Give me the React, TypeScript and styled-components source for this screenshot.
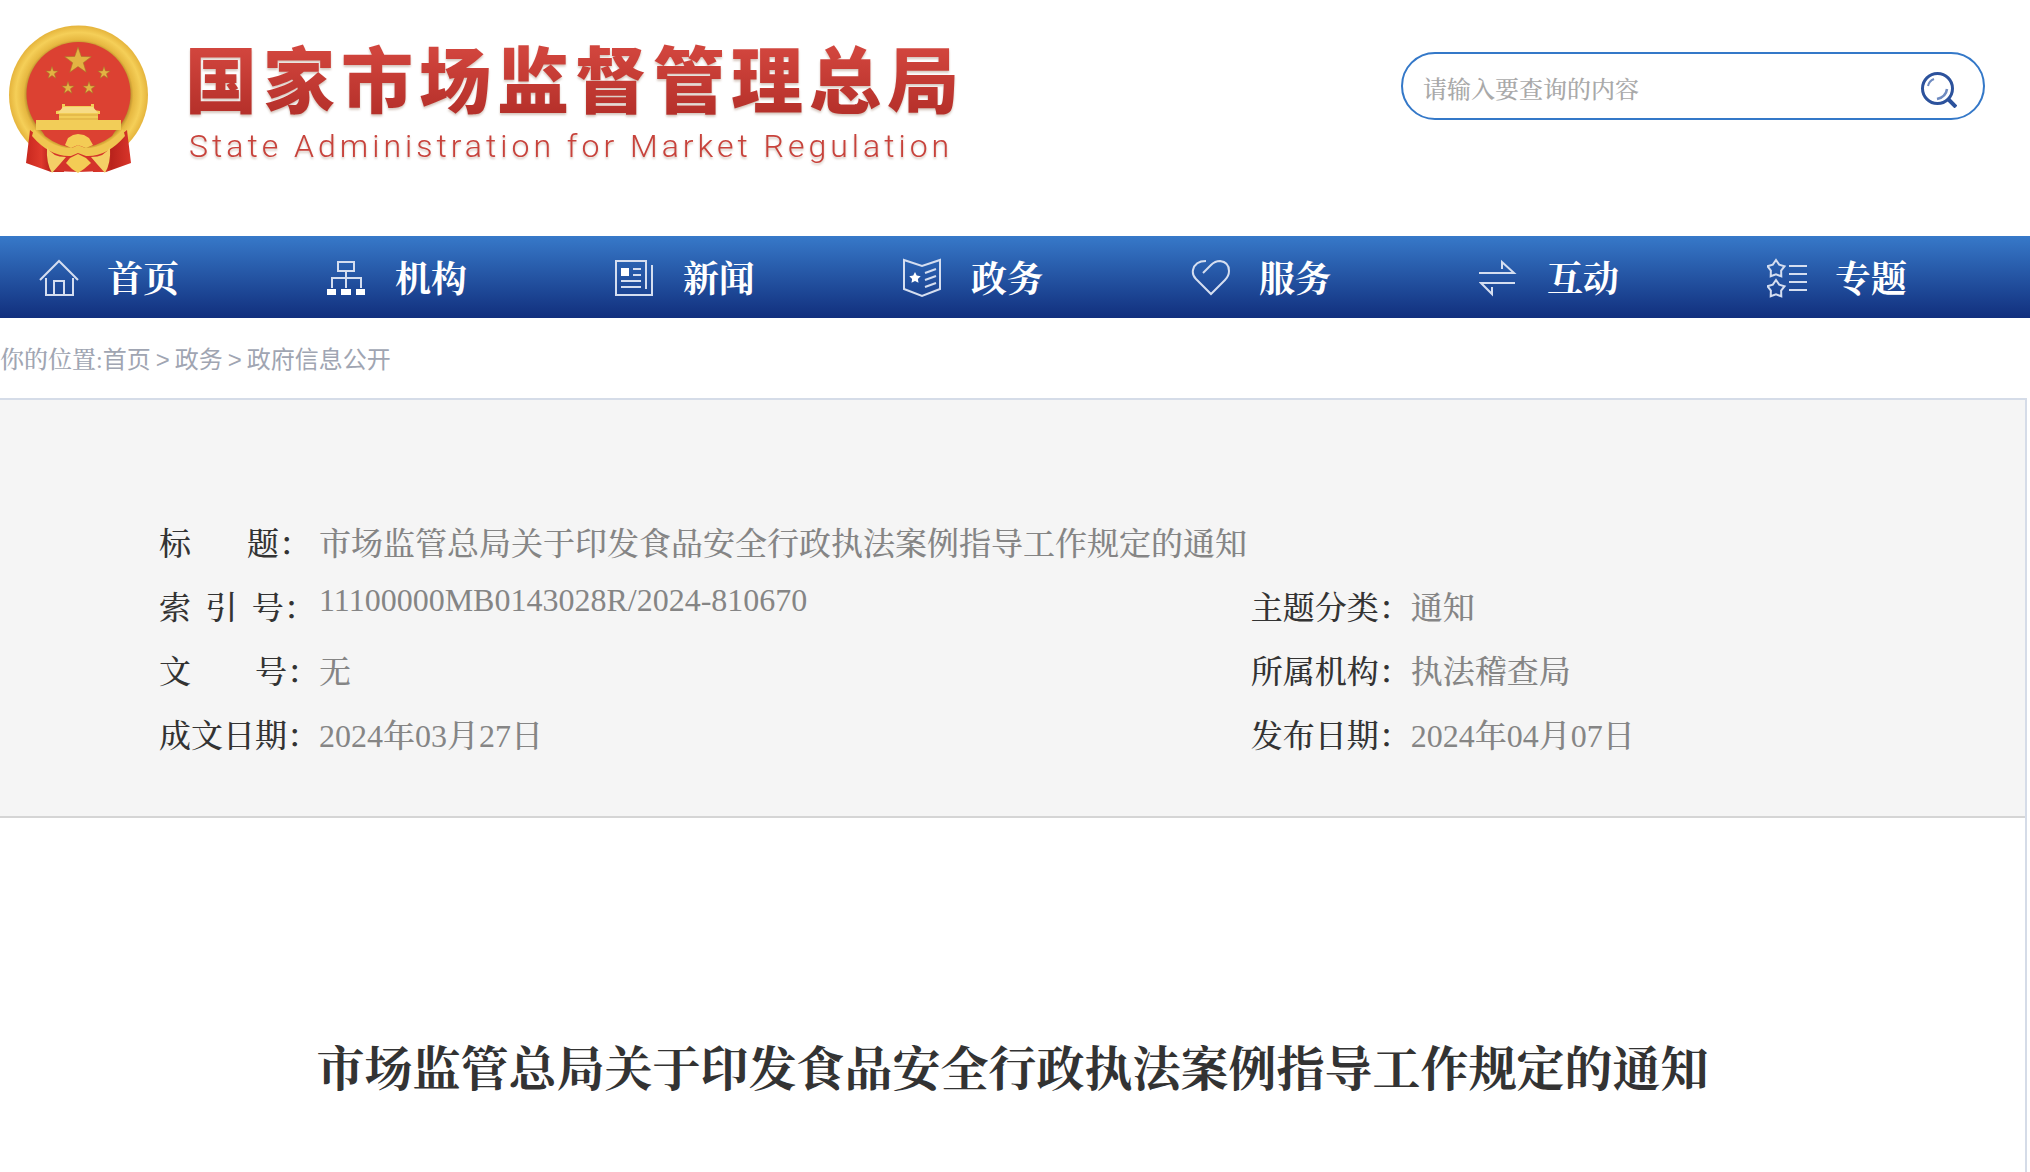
import React from "react";
import styled, { createGlobalStyle } from "styled-components";

const serif = `"Liberation Serif", "Noto Serif CJK SC", "Noto Sans CJK SC", serif`;
const sans = `"Liberation Sans", "Noto Sans CJK SC", sans-serif`;

const GlobalStyle = createGlobalStyle`
  * { box-sizing: border-box; }
  body { margin: 0; background: #fff; color: #333; font-family: ${serif}; }
  a { color: inherit; text-decoration: none; }
`;

const Page = styled.div`
  display: flex;
  flex-direction: column;
  min-height: 100vh;
`;

const Header = styled.header`
  display: flex;
  justify-content: space-between;
  align-items: flex-start;
  height: 236px;
  padding: 24px 45px 0 8px;
`;

const Brand = styled.a`
  display: flex;
  align-items: flex-start;
  gap: 36px;
`;

const BrandText = styled.span`
  display: flex;
  flex-direction: column;
  padding-top: 18px;
  white-space: nowrap;
  color: #c8423b;
  filter: drop-shadow(0 2px 1px rgba(120, 70, 40, 0.3));
`;

const BrandName = styled.span`
  font-family: ${sans};
  font-size: 72px;
  line-height: 80px;
  font-weight: 900;
  letter-spacing: 6px;
  color: transparent;
  background: linear-gradient(#d1453d 10%, #b5302a 90%);
  background-clip: text;
`;

const BrandEnglish = styled.span`
  padding-left: 4px;
  font-family: Roboto, ${sans};
  font-size: 32px;
  line-height: 48px;
  font-weight: 300;
  letter-spacing: 4px;
`;

const SearchForm = styled.form`
  display: flex;
  align-items: center;
  width: 584px;
  height: 68px;
  margin-top: 28px;
  padding: 8px 26px 0 20px;
  border: 2px solid #3478c8;
  border-radius: 34px;
`;

const SearchInput = styled.input`
  flex: 1;
  min-width: 0;
  padding: 0;
  border: 0;
  outline: 0;
  background: transparent;
  font-family: ${serif};
  font-size: 24px;
  line-height: 32px;
  font-weight: 500;
  color: #333;
  &::placeholder { color: #a9a9a9; opacity: 1; }
`;

const SearchButton = styled.button`
  display: flex;
  padding: 0;
  border: 0;
  background: none;
  cursor: pointer;
`;

const Nav = styled.nav`
  height: 82px;
  padding-right: 14px;
  background: linear-gradient(#3779c9, #112f7d);
`;

const NavList = styled.ul`
  display: flex;
  height: 100%;
  margin: 0;
  padding: 0;
  list-style: none;
`;

const NavItem = styled.li`
  flex: 1;
  display: flex;
`;

const NavLink = styled.a`
  display: flex;
  align-items: center;
  gap: 28px;
  padding: 2px 0 0 39px;
  font-size: 36px;
  line-height: 48px;
  font-weight: 700;
  color: #fff;
`;

const NavText = styled.span`
  padding-top: 4px;
`;

const IconSvg = styled.svg`
  display: block;
  fill: none;
  stroke: #d5def0;
  stroke-width: 2;
`;

const Breadcrumb = styled.nav`
  display: flex;
  align-items: center;
  height: 80px;
  padding-top: 4px;
  font-family: ${sans};
  font-size: 24px;
  line-height: 32px;
  color: #a0a5b2;
`;

const BreadcrumbLead = styled.span`
  font-family: ${serif};
  font-weight: 500;
`;

const Separator = styled.span`
  padding: 0 5px;
`;

const Panel = styled.main`
  flex: 1;
  margin-right: 3px;
  border: solid #d5dce8;
  border-width: 2px 2px 0 0;
`;

const Meta = styled.dl`
  display: grid;
  grid-template-columns: 64fr 36fr;
  margin: 0;
  padding: 112px 160px 48px 159px;
  border-bottom: 2px solid #d5d5d5;
  background: #f5f5f5;
  font-size: 32px;
  line-height: 64px;
  font-weight: 500;
`;

const Field = styled.div<{ $wide?: boolean }>`
  display: flex;
  grid-column: ${(p) => (p.$wide ? "1 / -1" : "auto")};
`;

const Label = styled.dt`
  width: 160px;
  flex: none;
  white-space: nowrap;
`;

const Value = styled.dd<{ $raised?: boolean }>`
  margin: 0;
  line-height: ${(p) => (p.$raised ? 48 : 64)}px;
  color: #858585;
`;

const Title = styled.h1`
  margin: 0;
  padding: 220px 40px 64px;
  font-size: 48px;
  line-height: 64px;
  font-weight: 700;
  text-align: center;
`;

const starPath = (cx: number, cy: number, r: number, inner = 0.4) =>
  Array.from({ length: 10 }, (_, i) => {
    const a = (Math.PI / 5) * i - Math.PI / 2;
    const d = i % 2 ? r * inner : r;
    return `${i ? "L" : "M"}${(cx + d * Math.cos(a)).toFixed(2)} ${(cy + d * Math.sin(a)).toFixed(2)}`;
  }).join("") + "Z";

const Emblem = () => (
  <svg width="141" height="150" viewBox="0 0 141 150" role="img" aria-label="国徽">
    <defs>
      <radialGradient id="ring" cx="50%" cy="50%" r="50%">
        <stop offset="74%" stopColor="#b98a2c" />
        <stop offset="79%" stopColor="#e6b740" />
        <stop offset="90%" stopColor="#f5cf58" />
        <stop offset="100%" stopColor="#e5b43c" />
      </radialGradient>
      <linearGradient id="drape" x1="0" y1="0" x2="1" y2="0">
        <stop offset="0" stopColor="#c8281f" />
        <stop offset="0.35" stopColor="#df3a2c" />
        <stop offset="0.55" stopColor="#b9231c" />
        <stop offset="1" stopColor="#d9352a" />
      </linearGradient>
    </defs>
    <circle cx="70.500" cy="71" r="69.500" fill="url(#ring)" />
    <circle cx="70.500" cy="70" r="52" fill="#dc4132" />
    <path d="M27 96H114L104 112Q88 124 70 124Q52 124 37 112Z" fill="#dc4132" />
    <g fill="#e3b343" stroke="#a8752a" strokeWidth="0.6">
      <path d={starPath(70, 37, 14)} />
      <path d={starPath(44, 49, 6.5)} />
      <path d={starPath(96, 49, 6.5)} />
      <path d={starPath(60, 64, 6.5)} />
      <path d={starPath(81, 64, 6.5)} />
    </g>
    <path d="M54 80H57V82H83V80H86V86L92 87V90H90V96H113V106H28V96H51V90H48V87L54 86Z" fill="#f2cd58" />
    <path d="M55 83H85L90 89H50Z" fill="#f7dc86" />
    <path d="M51 91H90M51 95H90" stroke="#d9a93d" fill="none" />
    <path d="M22 106Q30 112 38 120Q50 127 62 128L56 148H43L18 139Z" fill="url(#drape)" />
    <path d="M119 106Q111 112 103 120Q91 127 79 128L85 148H98L123 139Z" fill="url(#drape)" />
    <path d="M40 124Q55 130 70 124Q86 130 101 124L96 146Q70 150 45 146Z" fill="#d4342a" />
    <path d="M26 105Q44 125 64 124L70 121L77 124Q97 125 115 105L117 112Q99 133 78 132L70 129L63 132Q42 133 24 112Z" fill="#f0c650" />
    <path d="M57 121L60 114L65 111L70 110L76 111L81 114L85 121L78 124L70 121L63 124Z" fill="#f4cc55" />
    <path d="M58 139L62 134L70 130L78 134L83 139L76 145L70 149L64 145Z" fill="#f4cc55" />
    <path d="M39 123Q44 133 58 133L52 140L44 149Q38 139 39 123ZM102 123Q97 133 83 133L89 140L97 149Q103 139 102 123Z" fill="#f4cf66" />
  </svg>
);

const SearchIcon = () => (
  <svg width="36" height="36" viewBox="0 0 36 36" fill="none" stroke="#2c529c" aria-hidden="true">
    <circle cx="16.500" cy="16.500" r="15" strokeWidth="3" />
    <path d="M27 27L35 35" strokeWidth="4" />
    <path d="M7 14Q8 9 13 7" strokeWidth="2" stroke="#6f8bc0" />
    <path d="M26 17Q25 25 16 27" strokeWidth="2.500" stroke="#6f8bc0" />
  </svg>
);

const Icon = ({ children }: { children: React.ReactNode }) => (
  <IconSvg width="40" height="40" viewBox="0 0 40 40" aria-hidden="true">
    {children}
  </IconSvg>
);

const navItems = [
  {
    label: "首页",
    icon: (
      <Icon>
        <path d="M1 22L20 3L39 22M7 20V37H34V20" />
        <path d="M15 37V23H25V37" />
      </Icon>
    ),
  },
  {
    label: "机构",
    icon: (
      <Icon>
        <path d="M11 4H27V13H11ZM19 13V30M5 30V20H34V30" />
        <path d="M0 31H9V37H0ZM14 31H24V37H14ZM29 31H38V37H29Z" fill="#fff" stroke="none" />
      </Icon>
    ),
  },
  {
    label: "新闻",
    icon: (
      <Icon>
        <path d="M31 31V3H1V37H37V7" />
        <path d="M6 10H14V18H6Z" fill="#fff" stroke="none" />
        <path d="M18 11H26M18 17H26M6 23H26M6 29H26" />
      </Icon>
    ),
  },
  {
    label: "政务",
    icon: (
      <Icon>
        <path d="M1 2L19 8L37 2V31L19 38L1 31Z" />
        <path d={starPath(12, 20, 6, 0.5)} fill="#fff" stroke="none" />
        <path d="M22 15L33 11M22 22L33 18M22 29L33 25" />
      </Icon>
    ),
  },
  {
    label: "服务",
    icon: (
      <Icon>
        <path d="M12 15L20 7Q24 3 29 3Q38 4 38 13Q38 18 34 22L20 36L5 21Q1 17 2 12Q4 3 15 3" />
      </Icon>
    ),
  },
  {
    label: "互动",
    icon: (
      <Icon>
        <path d="M0 15H35L23 4V11M36 25H2L13 36V29" />
      </Icon>
    ),
  },
  {
    label: "专题",
    icon: (
      <Icon>
        <path d={starPath(9, 11, 9, 0.6)} />
        <path d={starPath(9, 31, 9, 0.6)} />
        <path d="M22 8H40M22 16H40M22 24H40M22 32H40" />
      </Icon>
    ),
  },
];

const docTitle = "市场监管总局关于印发食品安全行政执法案例指导工作规定的通知";

const fields = [
  { label: `标${"\u00a0".repeat(7)}题：`, value: docTitle, wide: true },
  { label: "索\u00a0\u2009引\u00a0\u2009号：", value: "11100000MB0143028R/2024-810670", raised: true },
  { label: "主题分类：", value: "通知" },
  { label: `文${"\u00a0".repeat(8)}号：`, value: "无" },
  { label: "所属机构：", value: "执法稽查局" },
  { label: "成文日期：", value: "2024年03月27日" },
  { label: "发布日期：", value: "2024年04月07日" },
];

export default function App() {
  return (
    <Page>
      <GlobalStyle />
      <Header>
        <Brand href="#">
          <Emblem />
          <BrandText>
            <BrandName>国家市场监督管理总局</BrandName>
            <BrandEnglish>State Administration for Market Regulation</BrandEnglish>
          </BrandText>
        </Brand>
        <SearchForm role="search" onSubmit={(e) => e.preventDefault()}>
          <SearchInput type="text" aria-label="搜索" placeholder="请输入要查询的内容" />
          <SearchButton type="submit" aria-label="查询">
            <SearchIcon />
          </SearchButton>
        </SearchForm>
      </Header>
      <Nav>
        <NavList>
          {navItems.map((item) => (
            <NavItem key={item.label}>
              <NavLink href="#">
                {item.icon}
                <NavText>{item.label}</NavText>
              </NavLink>
            </NavItem>
          ))}
        </NavList>
      </Nav>
      <Breadcrumb aria-label="你的位置">
        <BreadcrumbLead>你的位置:</BreadcrumbLead>
        <a href="#">首页</a>
        <Separator>&gt;</Separator>
        <a href="#">政务</a>
        <Separator>&gt;</Separator>
        <a href="#">政府信息公开</a>
      </Breadcrumb>
      <Panel>
        <Meta>
          {fields.map((f) => (
            <Field key={f.label} $wide={f.wide}>
              <Label>{f.label}</Label>
              <Value $raised={f.raised}>{f.value}</Value>
            </Field>
          ))}
        </Meta>
        <Title>{docTitle}</Title>
      </Panel>
    </Page>
  );
}
